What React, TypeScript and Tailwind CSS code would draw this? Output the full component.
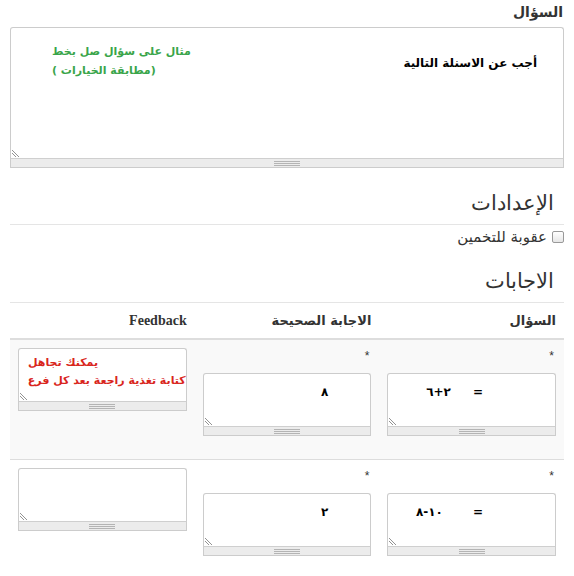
import React from "react";

function Grip() {
  return (
    <div className="flex flex-col items-center gap-[1px]">
      <div className="h-px w-[26px] bg-[#b4b4b4]" />
      <div className="h-px w-[26px] bg-[#b4b4b4]" />
      <div className="h-px w-[26px] bg-[#b4b4b4]" />
    </div>
  );
}

function ResizeCorner() {
  return (
    <svg className="absolute left-[1px] bottom-[1px]" width="8" height="8" viewBox="0 0 8 8">
      <line x1="0" y1="1" x2="7" y2="8" stroke="#777" strokeWidth="0.8" />
      <line x1="0" y1="4" x2="4" y2="8" stroke="#777" strokeWidth="0.8" />
    </svg>
  );
}

function Editor({
  h,
  children,
}: {
  h: string;
  children?: React.ReactNode;
}) {
  return (
    <div className="w-full">
      <div className={`relative ${h} rounded-t-[3px] border border-b-0 border-[#cccccc] bg-white`}>
        {children}
        <ResizeCorner />
      </div>
      <div className="flex h-[10px] items-center justify-center border border-[#cccccc] border-t-[#cfcfcf] bg-[#ececec]">
        <Grip />
      </div>
    </div>
  );
}

const tahoma = "font-['DejaVu_Sans',sans-serif]";

function Star() {
  return (
    <div className="h-[20px] pt-[2px] pr-[2px] font-['Liberation_Sans',sans-serif] text-[12px] leading-[12px] text-[#333333]">
      *
    </div>
  );
}

function Cell({ children }: { children: React.ReactNode }) {
  return <div className="px-[8px] pt-[8px] pb-[23px]">{children}</div>;
}

function Expr({ parts, gap }: { parts: string[]; gap: string }) {
  return (
    <div dir="ltr" className={`flex justify-end ${gap} pt-[10px] pr-[72px] text-[12px] font-bold leading-[16px] text-black`}>
      <div className="flex">
        {parts.map((p, i) => (
          <span key={i}>{p}</span>
        ))}
      </div>
      <span>=</span>
    </div>
  );
}

export default function App() {
  return (
    <div dir="rtl" className={`w-[574px] h-[576px] overflow-hidden bg-white px-[10px] text-[#333] ${tahoma}`}>
      <div className="pt-[3px] text-[14px] font-bold leading-[18px] text-[#333] pr-[1px]">السؤال</div>
      <div className="mt-[6px]">
        <Editor h="h-[131px]">
          <div className="flex justify-between px-[26px] pt-[14px]">
            <div className="pt-[13px] text-[12px] font-bold leading-[16px] text-black">أجب عن الاسنلة التالية</div>
            <div className="pl-[15px] text-left text-[11px] font-bold leading-[19px] text-[#3aa54a] whitespace-nowrap">
              <div>مثال على سؤال صل بخط</div>
              <div>(مطابقة الخيارات )</div>
            </div>
          </div>
        </Editor>
      </div>

      <div className="mt-[22px] border-b border-[#e5e5e5] pr-[10px] pb-[8px] text-[21px] font-light leading-[26px] text-[#333]">
        الإعدادات
      </div>
      <label className="mt-[3px] flex items-center gap-[4px] text-[15px] leading-[18px] text-[#333]">
        <span className="ml-[1px] inline-block h-[12px] w-[12px] rounded-[2px] border border-[#999] bg-gradient-to-b from-white to-[#e6e6e6]" />
        <span>عقوبة للتخمين</span>
      </label>

      <div className="mt-[22px] border-b border-[#e5e5e5] pr-[10px] pb-[8px] text-[21px] font-light leading-[26px] text-[#333]">
        الاجابات
      </div>

      <div className="grid grid-cols-3 border-b-2 border-[#dddddd] text-[13px] font-bold leading-[18px] text-[#333]">
        <div className="px-[8px] pt-[9px] pb-[8px]">السؤال</div>
        <div className="px-[8px] pt-[9px] pb-[8px]">الاجابة الصحيحة</div>
        <div className="px-[8px] pt-[9px] pb-[8px] font-['Liberation_Serif',serif] text-[14px]">Feedback</div>
      </div>

      <div className="grid grid-cols-3 border-b border-[#dddddd] bg-[#f9f9f9]">
        <Cell>
          <Star />
          <div className="mt-[5px]">
            <Editor h="h-[53px]">
              <Expr parts={["٦", "+", "٢"]} gap="gap-[22px]" />
            </Editor>
          </div>
        </Cell>
        <Cell>
          <Star />
          <div className="mt-[5px]">
            <Editor h="h-[53px]">
              <div className="pt-[10px] pr-[42px] text-[12px] font-bold leading-[16px] text-black">٨</div>
            </Editor>
          </div>
        </Cell>
        <Cell>
          <Editor h="h-[53px]">
            <div className="pt-[5px] pl-[9px] text-left text-[11px] font-bold leading-[18px] text-[#d9261c] whitespace-nowrap">
              <div>يمكنك تجاهل</div>
              <div>كتابة تغذية راجعة بعد كل فرع</div>
            </div>
          </Editor>
        </Cell>
      </div>

      <div className="grid grid-cols-3">
        <Cell>
          <Star />
          <div className="mt-[5px]">
            <Editor h="h-[53px]">
              <Expr parts={["٨", "-", "١٠"]} gap="gap-[30px]" />
            </Editor>
          </div>
        </Cell>
        <Cell>
          <Star />
          <div className="mt-[5px]">
            <Editor h="h-[53px]">
              <div className="pt-[10px] pr-[42px] text-[12px] font-bold leading-[16px] text-black">٢</div>
            </Editor>
          </div>
        </Cell>
        <Cell>
          <Editor h="h-[53px]" />
        </Cell>
      </div>
    </div>
  );
}
